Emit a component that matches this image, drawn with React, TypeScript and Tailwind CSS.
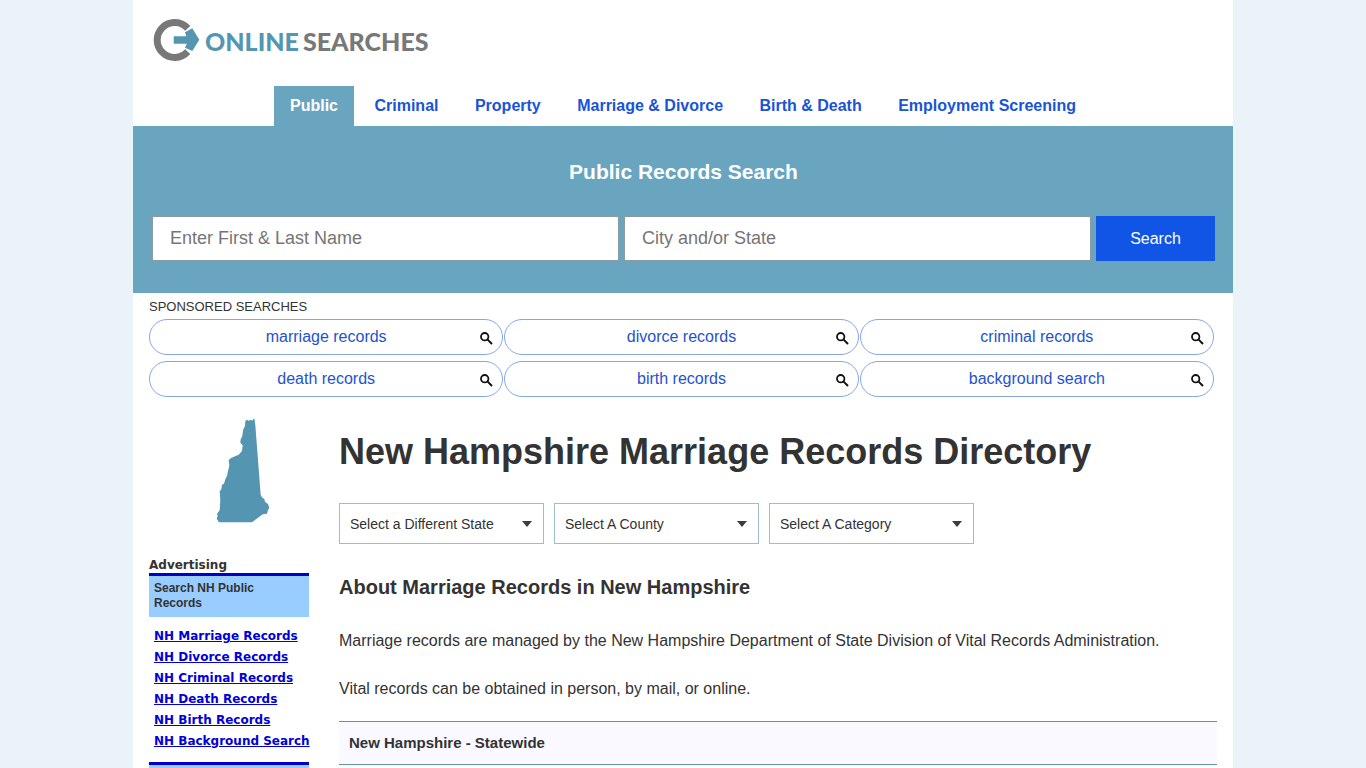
import { useState } from "react"
import clsx from "clsx"

const TABS = ["Public", "Criminal", "Property", "Marriage & Divorce", "Birth & Death", "Employment Screening"]

const SPONSORED = [
  "marriage records",
  "divorce records",
  "criminal records",
  "death records",
  "birth records",
  "background search",
]

const AD_LINKS = [
  "NH Marriage Records",
  "NH Divorce Records",
  "NH Criminal Records",
  "NH Death Records",
  "NH Birth Records",
  "NH Background Search",
]

const FILTERS = ["Select a Different State", "Select A County", "Select A Category"]

function Logo() {
  return (
    <a href="#" className="flex items-center gap-[5px] font-[Lato,sans-serif] text-[25px] leading-8 font-black">
      <svg viewBox="0 0 47 43" className="h-[43px] w-[47px]" aria-hidden="true">
        <path d="M34.700 9.300A17.500 17.500 0 1 0 34.700 32.700" fill="none" stroke="#787878" strokeWidth="7" />
        <path
          d="M20.700 17.300H33.300L32 13.300L39.300 9.300L46.300 20.800L39.300 32L32 28.800L33.800 24.700H20.700Z"
          fill="#5496b2"
        />
      </svg>
      <span className="flex gap-1">
        <span className="text-[#5496b2]">ONLINE</span>
        <span className="text-[#787878]">SEARCHES</span>
      </span>
    </a>
  )
}

function SearchIcon() {
  return (
    <svg viewBox="0 0 13 13" className="absolute top-3 right-[9px] h-[13px] w-[13px]" fill="none" stroke="#111" aria-hidden="true">
      <circle cx="4.700" cy="4.700" r="3.700" strokeWidth="1.800" />
      <path d="M7.400 7.400L12 12" strokeWidth="2" />
    </svg>
  )
}

function StateMap() {
  return (
    <svg viewBox="50 38 162 315" className="ml-[67px] h-[105px] w-[54px]" aria-label="New Hampshire" role="img">
      <path
        d="M138 48L142 43L148 46L155 43L158 46L165 39L168 60L184 268L189 277L195 281L197 289L206 296L210 308L206 314L203 325L190 327L175 338L158 351H59L52 340L55 332L53 325L61 315L63 285L61 258L66 252L68 238L74 235L78 222L83 212L90 180L88 165L95 158L118 148L128 137L130 120L123 112L124 102L129 92L131 75L137 62Z"
        fill="#5496b2"
      />
    </svg>
  )
}

function Filter({ label }: { label: string }) {
  return (
    <div className="relative w-[205px]">
      <select
        aria-label={label}
        className="h-[41px] w-full appearance-none border border-[#a0bcc6] bg-white pr-8 pl-[10px] text-sm text-[#333]"
      >
        <option>{label}</option>
      </select>
      <svg viewBox="0 0 10 6" className="pointer-events-none absolute top-[18px] right-3 h-[6px] w-[10px]" aria-hidden="true">
        <path d="M0 0H10L5 6Z" fill="#3c3c3c" />
      </svg>
    </div>
  )
}

function SearchBand() {
  return (
    <section className="bg-[#69a5bf] pt-8 pr-[18px] pb-8 pl-[19px]">
      <h2 className="text-center text-[21px] leading-7 font-bold text-white">Public Records Search</h2>
      <form className="mt-[30px] flex gap-[5px]" onSubmit={(e) => e.preventDefault()}>
        <input
          aria-label="Name"
          placeholder="Enter First & Last Name"
          className="h-[45px] min-w-0 flex-1 border border-[#8a9ba3] bg-white px-[17px] text-lg placeholder:text-[#757575]"
        />
        <input
          aria-label="Location"
          placeholder="City and/or State"
          className="h-[45px] min-w-0 flex-1 border border-[#8a9ba3] bg-white px-[17px] text-lg placeholder:text-[#757575]"
        />
        <button type="submit" className="h-[45px] w-[119px] bg-[#1155e6] text-base text-white">
          Search
        </button>
      </form>
    </section>
  )
}

function Sidebar() {
  return (
    <aside className="w-40 shrink-0">
      <StateMap />
      <div className="mt-[34px] font-['DejaVu_Sans',Verdana,sans-serif]">
        <p className="text-xs leading-4 font-bold">Advertising</p>
        <p className="border-t-[3px] border-[#0000cc] bg-[#99ccff] pt-[5px] pr-10 pb-[6px] pl-[5px] font-['Liberation_Sans',Arial,sans-serif] text-xs leading-[15px] font-bold">
          Search NH Public Records
        </p>
        <ul className="pt-[9px] pl-[5px] text-xs leading-[21px] font-bold whitespace-nowrap">
          {AD_LINKS.map((link) => (
            <li key={link}>
              <a href="#" className="text-[#0000dd] underline">
                {link}
              </a>
            </li>
          ))}
        </ul>
        <div className="mt-[10px] h-[6px] border-t-[3px] border-[#0000cc] bg-[#99ccff]" />
      </div>
    </aside>
  )
}

export default function App() {
  const [active, setActive] = useState("Public")

  return (
    <div className="min-h-screen bg-[#eaf3f7] font-['Liberation_Sans',Arial,sans-serif] text-[#333]">
      <div className="mx-auto min-h-screen max-w-[1100px] bg-white">
        <header>
          <div className="flex h-[86px] items-start pt-[19px] pl-5">
            <Logo />
          </div>
          <nav className="h-10 text-center text-base leading-10 font-bold">
            {TABS.map((tab) => (
              <span key={tab}>
                <a
                  href="#"
                  onClick={() => setActive(tab)}
                  className={clsx(
                    "inline-block px-4",
                    tab === active ? "bg-[#69a5bf] text-white" : "text-[#1a53d8]"
                  )}
                >
                  {tab}
                </a>{" "}
              </span>
            ))}
          </nav>
        </header>

        <SearchBand />

        <section className="pt-[5px] pr-[19px] pl-4">
          <h2 className="text-[13px] leading-[18px]">SPONSORED SEARCHES</h2>
          <div className="mt-[3px] grid grid-cols-3 gap-x-px gap-y-[6px]">
            {SPONSORED.map((term) => (
              <a
                key={term}
                href="#"
                className="relative h-9 rounded-full border border-[#86a6e6] text-center text-base leading-[34px] text-[#2452d0]"
              >
                {term}
                <SearchIcon />
              </a>
            ))}
          </div>
        </section>

        <div className="flex gap-[30px] pt-[21px] pr-4 pl-4">
          <Sidebar />
          <main className="min-w-0 flex-1">
            <h1 className="pt-[11px] text-4xl leading-[46px] font-bold">New Hampshire Marriage Records Directory</h1>
            <div className="mt-7 flex gap-[10px]">
              {FILTERS.map((label) => (
                <Filter key={label} label={label} />
              ))}
            </div>
            <h2 className="mt-[31px] text-xl leading-6 font-bold">About Marriage Records in New Hampshire</h2>
            <p className="mt-[30px] text-base leading-6">
              Marriage records are managed by the New Hampshire Department of State Division of Vital Records Administration.
            </p>
            <p className="mt-6 text-base leading-6">Vital records can be obtained in person, by mail, or online.</p>
            <h3 className="mt-5 border-y border-[#5c93a6] bg-[#f9f9ff] px-[10px] text-[15px] leading-[42px] font-bold">
              New Hampshire - Statewide
            </h3>
          </main>
        </div>
      </div>
    </div>
  )
}
